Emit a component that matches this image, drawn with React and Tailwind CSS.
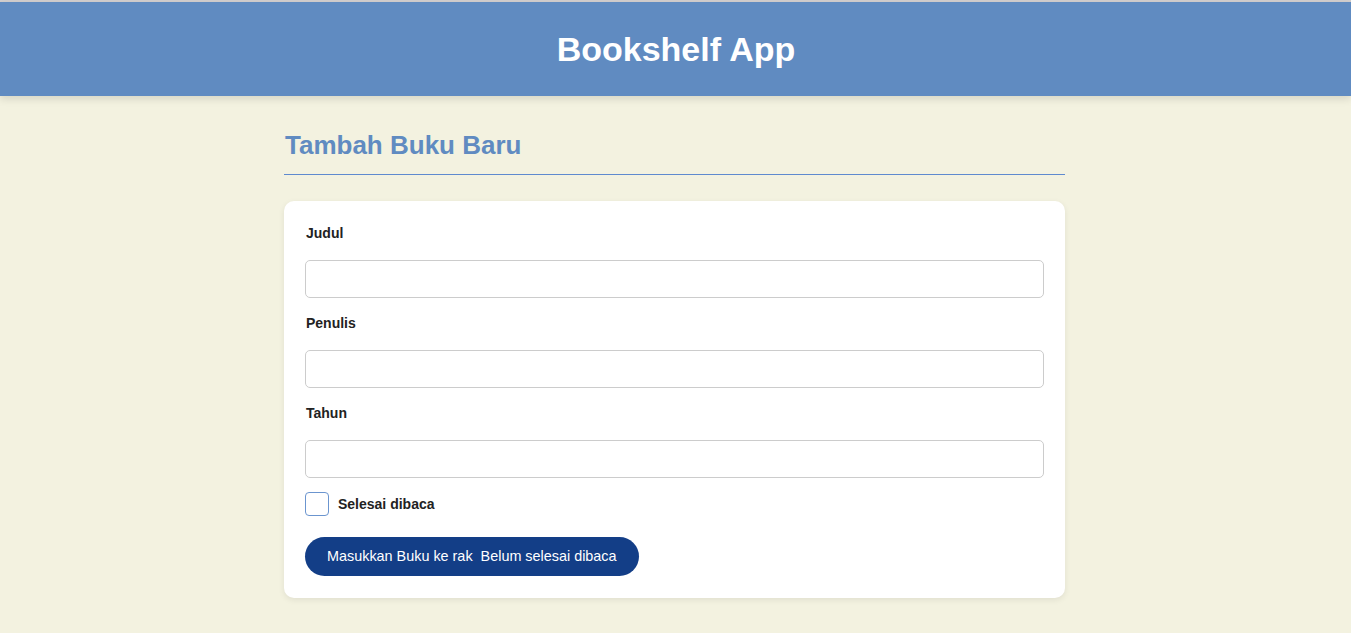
export default function App() {
  const font = { fontFamily: '"Liberation Sans", Arial, sans-serif' };
  return (
    <div className="min-h-[633px] bg-[#F3F2E0] text-[#333]" style={font}>
      <div className="h-[2px] bg-[#d3cfcf]" />
      <header className="h-[94px] bg-[#608BC1] flex items-center justify-center shadow-[0_3px_8px_rgba(0,0,0,0.12)] relative">
        <h1 className="text-[34px] font-bold text-white leading-none pl-[1px]">Bookshelf App</h1>
      </header>
      <main className="w-[781px] ml-[284px] pt-[34px]">
        <h2 className="text-[26px] font-bold text-[#608BC1] leading-[30px] pl-[1px] pb-[14px] border-b border-[#5E8ACF]">
          Tambah Buku Baru
        </h2>
        <form className="mt-[26px] bg-white rounded-[10px] shadow-[0_2px_6px_rgba(0,0,0,0.08)] px-[21px] pt-[22px] pb-[22px]" onSubmit={(e) => e.preventDefault()}>
          {["Judul", "Penulis", "Tahun"].map((l, i) => (
            <div key={l} className={i > 0 ? "mt-[15px]" : ""}>
              <label className="block text-[14px] font-bold leading-5 text-[#222] pl-[1px]">{l}</label>
              <input type="text" className="mt-[17px] block w-full h-[38px] border border-[#ccc] rounded-[5px] bg-white px-2 outline-none" />
            </div>
          ))}
          <div className="mt-[14px] flex items-center h-6">
            <input type="checkbox" className="appearance-none w-6 h-6 border border-[#6b95cf] rounded-[4px] bg-white m-0" />
            <label className="ml-[9px] text-[14px] font-bold text-[#222]">Selesai dibaca</label>
          </div>
          <button type="submit" className="mt-[21px] h-[39px] px-[22px] rounded-full bg-[#133E87] text-white text-[14.4px] leading-none">
            Masukkan Buku ke rak{"\u00a0 "}<span>Belum selesai dibaca</span>
          </button>
        </form>
      </main>
    </div>
  );
}
